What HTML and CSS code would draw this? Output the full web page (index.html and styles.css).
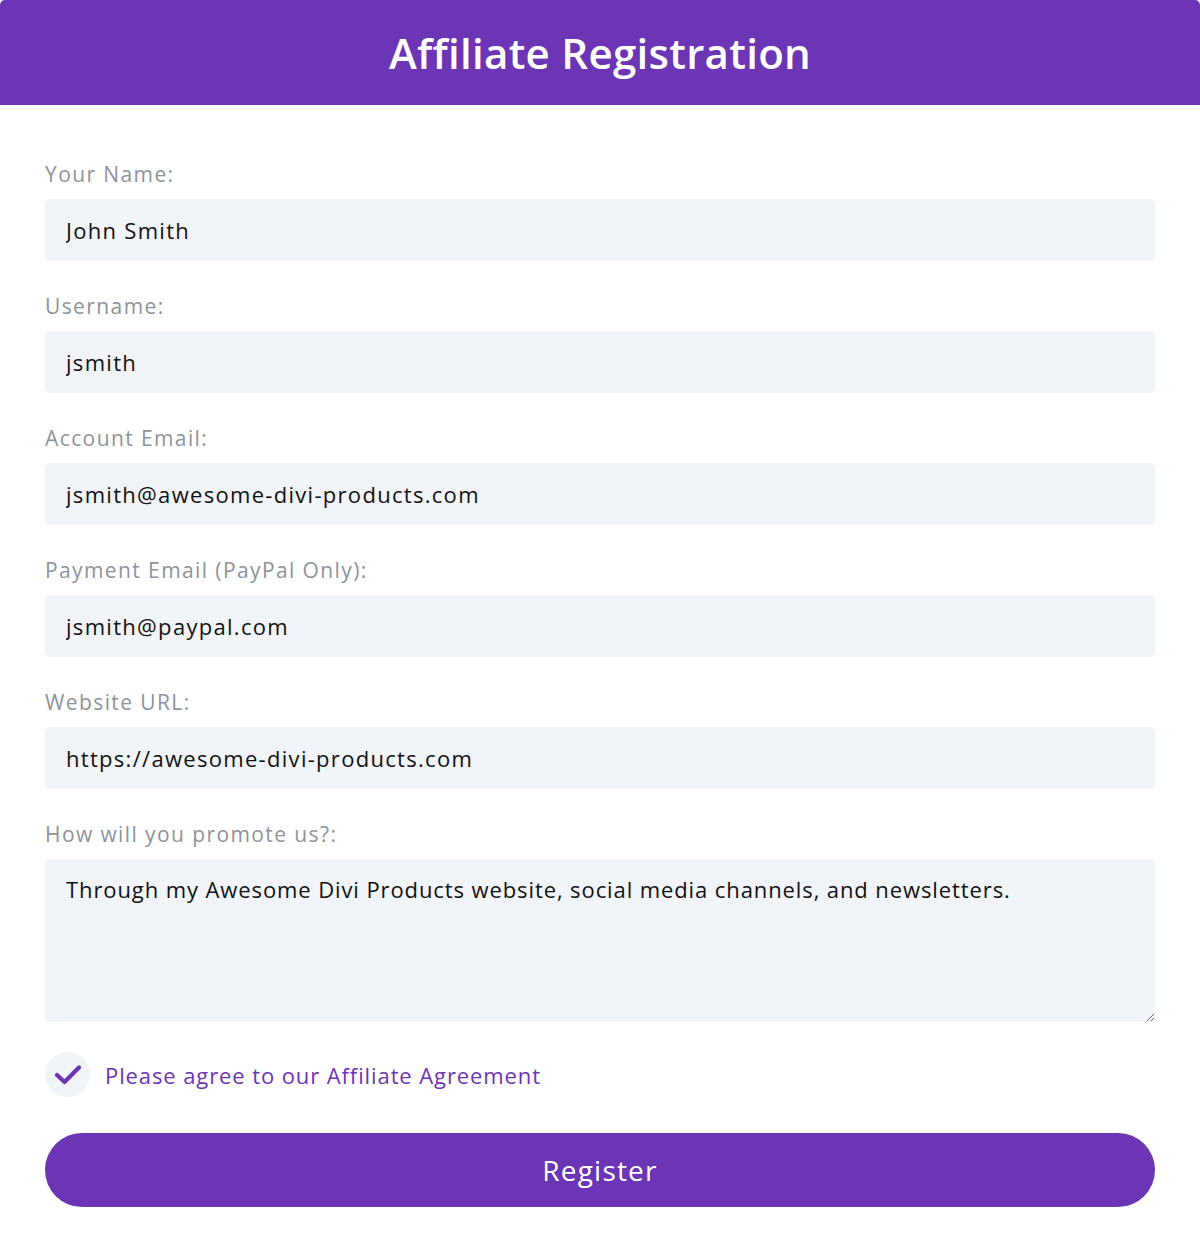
FILE: index.html
```html
<!DOCTYPE html>
<html lang="en">
<head>
    <meta charset="UTF-8">
    <meta name="viewport" content="width=device-width, initial-scale=1.0">
    <title>Affiliate Registration</title>
    <link rel="stylesheet" href="styles.css">
</head>
<body>
    <main class="card">
        <header class="card-header">
            <h1>Affiliate Registration</h1>
        </header>
        <form class="reg-form">
            <div class="field">
                <label for="name">Your Name:</label>
                <input type="text" id="name" value="John Smith">
            </div>
            <div class="field">
                <label for="user">Username:</label>
                <input type="text" id="user" value="jsmith">
            </div>
            <div class="field">
                <label for="email">Account Email:</label>
                <input type="text" id="email" value="jsmith@awesome-divi-products.com">
            </div>
            <div class="field">
                <label for="paypal">Payment Email (PayPal Only):</label>
                <input type="text" id="paypal" value="jsmith@paypal.com">
            </div>
            <div class="field">
                <label for="url">Website URL:</label>
                <input type="text" id="url" value="https://awesome-divi-products.com">
            </div>
            <div class="field">
                <label for="promo">How will you promote us?:</label>
                <textarea id="promo">Through my Awesome Divi Products website, social media channels, and newsletters.</textarea>
            </div>
            <label class="agree">
                <span class="check-box">
                    <svg width="26" height="20" viewBox="0 0 26 20"><path d="M2 10 L9.5 17 L24 2.5" fill="none" stroke="#6c35b5" stroke-width="4.2" stroke-linecap="round" stroke-linejoin="round"/></svg>
                </span>
                <span>Please agree to our Affiliate Agreement</span>
            </label>
            <button type="button" class="register-btn">Register</button>
        </form>
    </main>
</body>
</html>
```

FILE: styles.css
```css
body {
    margin: 0;
    padding: 0;
    background-color: #ffffff;
    font-family: "Open Sans", "Liberation Sans", sans-serif;
}
.card {
    width: 1200px;
    height: 1252px;
    background-color: #ffffff;
    border-radius: 5px;
    overflow: hidden;
}
.card-header {
    height: 105px;
    background-color: #6c35b5;
    display: flex;
    align-items: center;
    justify-content: center;
}
.card-header h1 {
    margin: 0;
    color: #ffffff;
    font-size: 42px;
    font-weight: 600;
    letter-spacing: 0.3px;
}
.reg-form {
    padding: 54px 45px 45px;
}
.field {
    display: flex;
    flex-direction: column;
    gap: 10px;
    margin-bottom: 30px;
}
.field label {
    font-size: 21px;
    line-height: 30px;
    letter-spacing: 1.4px;
    color: #8e939b;
}
.field input,
.field textarea {
    box-sizing: border-box;
    width: 100%;
    border: none;
    border-radius: 5px;
    background-color: #f1f4f8;
    color: #111111;
    font-family: inherit;
    font-size: 22px;
    letter-spacing: 1.3px;
    padding: 0 21px;
    outline: none;
}
.field input {
    height: 62px;
}
.field textarea {
    height: 163px;
    padding-top: 13px;
    line-height: 34px;
    letter-spacing: 0.9px;
    resize: vertical;
}
.agree {
    display: flex;
    align-items: center;
    gap: 15px;
    margin-top: 2px;
    color: #6c35b5;
    font-size: 22px;
    letter-spacing: 0.9px;
}
.check-box {
    width: 45px;
    height: 45px;
    border-radius: 50%;
    background-color: #f1f4f8;
    display: flex;
    align-items: center;
    justify-content: center;
}
.register-btn {
    display: block;
    width: 100%;
    height: 74px;
    margin-top: 36px;
    border: none;
    border-radius: 37px;
    background-color: #6c35b5;
    color: #ffffff;
    font-family: inherit;
    font-size: 28px;
    font-weight: 500;
    letter-spacing: 1.2px;
    cursor: pointer;
}
```
